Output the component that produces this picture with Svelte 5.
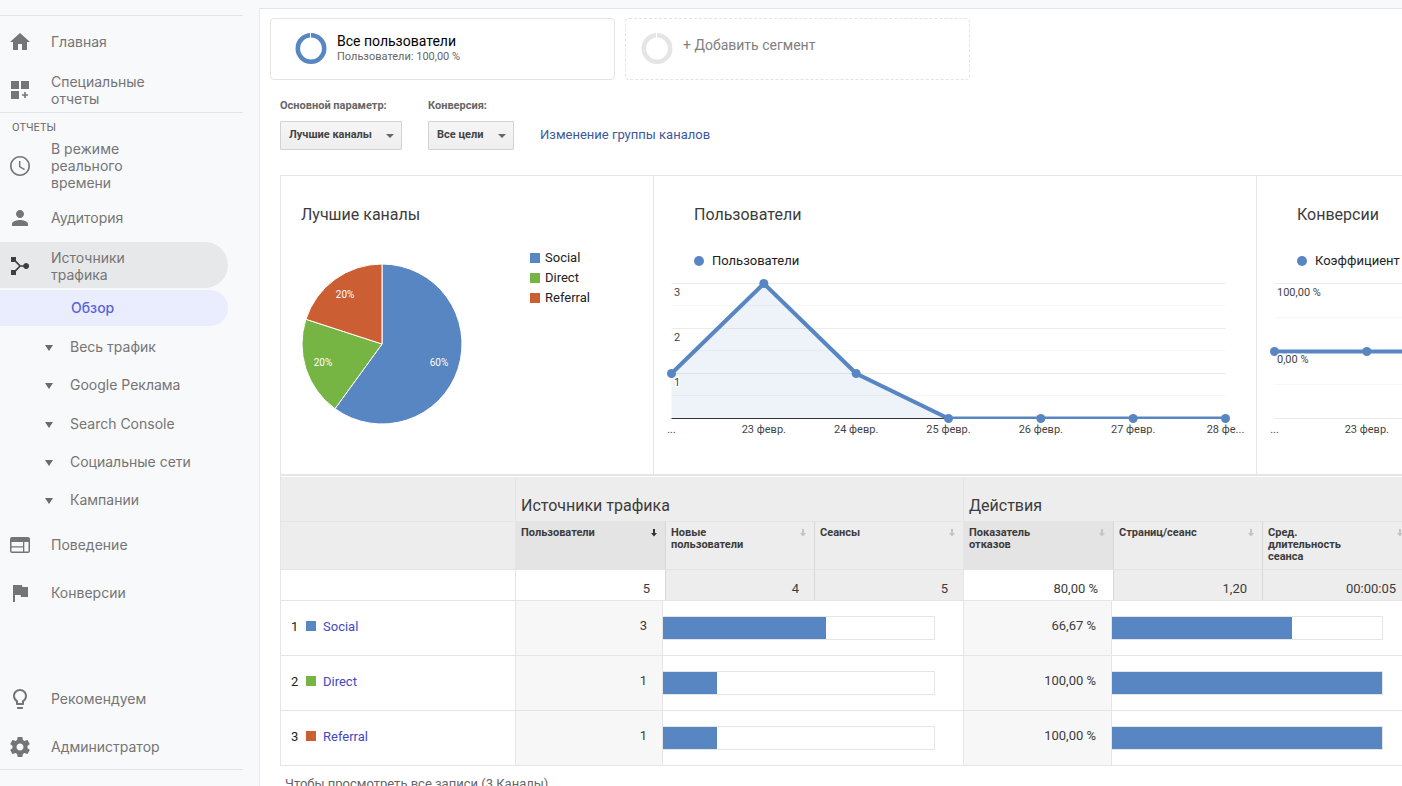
<script>
	const topItems = [
		{ label: 'Главная', icon: 'home' },
		{ label: 'Специальные отчеты', icon: 'custom' }
	];

	const reportItems = [
		{ label: 'В режиме реального времени', icon: 'clock' },
		{ label: 'Аудитория', icon: 'person' },
		{ label: 'Источники трафика', icon: 'sources', open: true },
		{ label: 'Поведение', icon: 'web' },
		{ label: 'Конверсии', icon: 'flag' }
	];

	const subItems = ['Весь трафик', 'Google Реклама', 'Search Console', 'Социальные сети', 'Кампании'];

	const bottomItems = [
		{ label: 'Рекомендуем', icon: 'bulb' },
		{ label: 'Администратор', icon: 'gear' }
	];

	const icons = {
		home: 'M10 20v-6h4v6h5v-8h3L12 3 2 12h3v8z',
		custom: 'M3 3h8v8H3zM13 3h8v8h-8zM3 13h8v8H3zM16.2 14h1.6v2.200h2.200v1.600h-2.200v2.200h-1.600v-2.200H14v-1.600h2.200z',
		clock:
			'M11.990 2C6.470 2 2 6.480 2 12s4.470 10 9.990 10C17.520 22 22 17.520 22 12S17.520 2 11.990 2zM12 20.400a8.400 8.400 0 1 1 0-16.800 8.400 8.400 0 0 1 0 16.800zM12.400 7H11v6l5.250 3.150.65-1.200-4.500-2.670z',
		person:
			'M12 12c2.210 0 4-1.790 4-4s-1.790-4-4-4-4 1.790-4 4 1.790 4 4 4zm0 2c-2.670 0-8 1.340-8 4v2h16v-2c0-2.660-5.330-4-8-4z',
		sources:
			'M3 3h5v3.600L12.500 11.200h2.700a3 3 0 1 1 0 1.600h-2.700L8 17.400V21H3v-5h4l4-4-4-4H3z',
		web: 'M20 4H4c-1.100 0-1.990.9-1.990 2L2 18c0 1.100.9 2 2 2h16c1.100 0 2-.9 2-2V6c0-1.100-.9-2-2-2zM15 18.500H3.500v-4H15zm0-5.200H3.500V9H15zm5.500 5.200h-4.200V9h4.200z',
		flag: 'M14.400 6 14 4H5v17h2v-7h5.600l.4 2h7V6z',
		bulb: 'M9 21c0 .55.45 1 1 1h4c.55 0 1-.45 1-1v-1H9v1zM12 2C8.140 2 5 5.140 5 9c0 2.380 1.190 4.470 3 5.740V17c0 .55.45 1 1 1h6c.55 0 1-.45 1-1v-2.260c1.810-1.270 3-3.360 3-5.740 0-3.860-3.140-7-7-7zm2.850 11.100-.85.6V16h-4v-2.300l-.85-.6A4.997 4.997 0 0 1 7 9c0-2.760 2.240-5 5-5s5 2.240 5 5c0 1.630-.8 3.160-2.150 4.100z',
		gear: 'M19.430 12.980c.04-.32.07-.64.07-.98s-.03-.66-.07-.98l2.110-1.650c.19-.15.24-.42.12-.64l-2-3.460c-.12-.22-.39-.3-.61-.22l-2.490 1c-.52-.4-1.080-.73-1.690-.98l-.38-2.650C14.460 2.180 14.250 2 14 2h-4c-.25 0-.46.18-.49.42l-.38 2.650c-.61.25-1.170.59-1.690.98l-2.490-1c-.23-.09-.49 0-.61.22l-2 3.460c-.13.22-.07.49.12.64l2.110 1.650c-.04.32-.07.65-.07.98s.03.66.07.98l-2.110 1.650c-.19.15-.24.42-.12.64l2 3.460c.12.22.39.3.61.22l2.490-1c.52.4 1.080.73 1.690.98l.38 2.650c.03.24.24.42.49.42h4c.25 0 .46-.18.49-.42l.38-2.650c.61-.25 1.170-.59 1.690-.98l2.490 1c.23.09.49 0 .61-.22l2-3.460c.12-.22.07-.49-.12-.64l-2.110-1.650zM12 15.500c-1.930 0-3.500-1.570-3.500-3.500s1.570-3.500 3.500-3.500 3.500 1.570 3.500 3.500-1.570 3.500-3.500 3.500z'
	};

	const channels = [
		{ name: 'Social', color: '#5886c2', users: 3, share: 60, bounce: '66,67 %', bounceShare: 66.67 },
		{ name: 'Direct', color: '#76b543', users: 1, share: 20, bounce: '100,00 %', bounceShare: 100 },
		{ name: 'Referral', color: '#cb5f33', users: 1, share: 20, bounce: '100,00 %', bounceShare: 100 }
	];

	const columns = [
		{ label: 'Пользователи', total: '5', span: 2, active: true, sorted: true },
		{ label: 'Новые пользователи', total: '4', span: 1 },
		{ label: 'Сеансы', total: '5', span: 1, last: true },
		{ label: 'Показатель отказов', total: '80,00 %', span: 2, active: true },
		{ label: 'Страниц/сеанс', total: '1,20', span: 1 },
		{ label: 'Сред. длительность сеанса', total: '00:00:05', span: 1, last: true }
	];

	// pie
	const R = 80;
	function point(share, radius) {
		const a = (share / 100) * Math.PI * 2;
		return [R + Math.sin(a) * radius, R - Math.cos(a) * radius];
	}
	let from = 0;
	const slices = channels.map((c) => {
		const start = point(from, R);
		const end = point(from + c.share, R);
		const label = point(from + c.share / 2, 61);
		from += c.share;
		return {
			...c,
			label,
			d: `M${R} ${R}L${start}A${R} ${R} 0 ${c.share > 50 ? 1 : 0} 1 ${end}Z`
		};
	});

	// line charts
	const left = 17.5;
	const right = 571.5;
	const step = (right - left) / 6;
	const bottom = 145.5;

	const charts = [
		{
			id: 'users',
			title: 'Пользователи',
			legend: 'Пользователи',
			values: [45, 135, 45, 0, 0, 0, 0],
			days: ['...', '23 февр.', '24 февр.', '25 февр.', '26 февр.', '27 февр.', '28 фе...'],
			major: [135, 90, 45],
			minor: [113, 68, 23],
			ticks: [
				{ text: '3', at: 135 },
				{ text: '2', at: 90 },
				{ text: '1', at: 45 }
			],
			area: true
		},
		{
			id: 'conversions',
			title: 'Конверсии',
			legend: 'Коэффициент',
			values: [67, 67, 67, 67, 67, 67, 67],
			days: ['...', '23 февр.'],
			major: [135, 0],
			minor: [101, 34],
			ticks: [
				{ text: '100,00 %', at: 135 },
				{ text: '0,00 %', at: 68 }
			],
			area: false
		}
	];

	function linePoints(values) {
		return values.map((v, i) => `${left + i * step},${bottom - v}`).join(' ');
	}
</script>

{#snippet navItem(item)}
	<a class="nav-item" class:open={item.open} href="#{item.icon}">
		<svg width="24" height="24" viewBox="0 0 24 24" aria-hidden="true">
			<path d={icons[item.icon]} fill-rule="evenodd" />
		</svg>
		<span>{item.label}</span>
	</a>
{/snippet}

{#snippet ring(color)}
	<svg class="ring" width="32" height="32" viewBox="0 0 32 32" aria-hidden="true">
		<circle cx="16" cy="15.500" r="13.200" fill="none" stroke={color} stroke-width="4.600" />
		<path d="M15.500 0v5" stroke="#fff" />
	</svg>
{/snippet}

<div class="app">
	<aside class="sidebar">
		<nav class="section top">
			{#each topItems as item}
				{@render navItem(item)}
			{/each}
		</nav>
		<nav class="section reports">
			<h4>ОТЧЕТЫ</h4>
			{#each reportItems as item}
				{@render navItem(item)}
				{#if item.open}
					<ul class="submenu">
						<li class="current"><a href="#overview">Обзор</a></li>
						{#each subItems as sub}
							<li>
								<a href="#sub">
									<svg width="8" height="7" viewBox="0 0 8 7" aria-hidden="true"><path d="M0 1h8L4 7z" /></svg>
									{sub}
								</a>
							</li>
						{/each}
					</ul>
				{/if}
			{/each}
		</nav>
		<nav class="section bottom">
			{#each bottomItems as item}
				{@render navItem(item)}
			{/each}
		</nav>
	</aside>

	<main>
		<div class="segments">
			<button type="button" class="segment">
				{@render ring('#5886c2')}
				<span class="segment-text">
					<span class="segment-name">Все пользователи</span>
					<span class="segment-info">Пользователи: 100,00 %</span>
				</span>
			</button>
			<button type="button" class="segment add">
				{@render ring('#e5e5e5')}
				<span class="segment-text">+ Добавить сегмент</span>
			</button>
		</div>

		<div class="filters">
			<div class="field dimension">
				<label for="dimension">Основной параметр:</label>
				<div class="select">
					<select id="dimension"><option>Лучшие каналы</option></select>
				</div>
			</div>
			<div class="field goal">
				<label for="goal">Конверсия:</label>
				<div class="select">
					<select id="goal"><option>Все цели</option></select>
				</div>
			</div>
			<a class="edit-link" href="#channels">Изменение группы каналов</a>
		</div>

		<div class="report">
			<div class="panels">
				<section class="panel pie-panel">
					<h2>Лучшие каналы</h2>
					<div class="pie-row">
						<svg class="pie" width="160" height="160" viewBox="0 0 160 160">
							{#each slices as s}
								<path d={s.d} fill={s.color} stroke="#fff" />
							{/each}
							{#each slices as s}
								<text x={s.label[0] - 1} y={s.label[1] + 3}>{s.share}%</text>
							{/each}
						</svg>
						<ul class="pie-legend">
							{#each channels as c}
								<li><i class="swatch" style="background: {c.color}"></i>{c.name}</li>
							{/each}
						</ul>
					</div>
				</section>

				{#each charts as chart}
					<section class="panel line-panel">
						<h2>{chart.title}</h2>
						<p class="line-legend"><i></i>{chart.legend}</p>
						<svg class="line-chart" width="602" height="170" viewBox="0 0 602 170">
							<clipPath id="plot-{chart.id}">
								<rect x="0" y="0" width="602" height="146" />
							</clipPath>
							{#each chart.minor as m}
								<path class="minor" d="M{left} {bottom - m}H{right}" />
							{/each}
							{#each chart.major as m}
								<path class="major" d="M{left} {bottom - m}H{right}" />
							{/each}
							{#if chart.area}
								<polygon
									class="area"
									points="{left},{bottom} {linePoints(chart.values)} {right},{bottom}"
								/>
								<path class="axis" d="M{left} {bottom}H{right}" />
							{/if}
							<polyline
								class="line"
								points={linePoints(chart.values)}
								clip-path="url(#plot-{chart.id})"
							/>
							{#each chart.values as v, i}
								<circle class="dot" cx={left + i * step} cy={bottom - v} r="4.500" />
							{/each}
							{#each chart.ticks as t}
								<text class="tick" x="20" y={bottom - t.at + 12}>{t.text}</text>
							{/each}
							{#each chart.days as day, i}
								<text class="day" x={left + i * step} y="160">{day}</text>
							{/each}
						</svg>
					</section>
				{/each}
			</div>

			<table>
				<colgroup>
					<col class="c-name" />
					<col class="c-users" />
					<col class="c-rest" />
					<col class="c-metric" />
					<col class="c-metric" />
					<col class="c-bounce" />
					<col class="c-gap" />
					<col class="c-metric" />
					<col class="c-metric" />
				</colgroup>
				<thead>
					<tr class="groups">
						<td></td>
						<th colspan="4" scope="colgroup">Источники трафика</th>
						<th colspan="4" scope="colgroup">Действия</th>
					</tr>
					<tr class="heads">
						<td></td>
						{#each columns as col}
							<th colspan={col.span} class:active={col.active} class:last={col.last} scope="col">
								<div class="head">
									<span>{col.label}</span>
									<svg class:sorted={col.sorted} width="6" height="8" viewBox="0 0 6 8" aria-hidden="true">
										<path d="M2 0h2v4h2L3 7.500 0 4h2z" />
									</svg>
								</div>
							</th>
						{/each}
					</tr>
					<tr class="totals">
						<td class="blank"></td>
						{#each columns as col}
							<td colspan={col.span} class:active={col.active} class:last={col.last}>{col.total}</td>
						{/each}
					</tr>
				</thead>
				<tbody>
					{#each channels as c, i}
						<tr>
							<td>
								<div class="channel">
									<span class="index">{i + 1}</span>
									<i class="swatch" style="background: {c.color}"></i>
									<a href="#{c.name}">{c.name}</a>
								</div>
							</td>
							<td class="value">{c.users}</td>
							<td colspan="3" class="bar-cell">
								<div class="bar"><div class="fill" style="width: {(c.users / 5) * 100}%"></div></div>
							</td>
							<td class="value">{c.bounce}</td>
							<td colspan="3" class="bar-cell">
								<div class="bar"><div class="fill" style="width: {c.bounceShare}%"></div></div>
							</td>
						</tr>
					{/each}
				</tbody>
			</table>
		</div>
		<p class="footnote">Чтобы просмотреть все записи (3 Каналы)</p>
	</main>
</div>

<style>
	:global(body) {
		margin: 0;
		background: #f8f9fb;
	}

	.app {
		display: grid;
		grid-template-columns: 259px minmax(0, 1fr);
		height: 100vh;
		overflow: hidden;
		font-family: Roboto, sans-serif;
		font-size: 13px;
		color: #3c3c3c;
	}

	h2,
	h4,
	p,
	ul {
		margin: 0;
		padding: 0;
		font-weight: 400;
		list-style: none;
	}

	a {
		text-decoration: none;
	}

	/* sidebar */
	.sidebar {
		display: flex;
		flex-direction: column;
		box-sizing: border-box;
		padding: 15px 16px 16px 0;
		font-family: Inter, sans-serif;
		font-size: 14px;
		line-height: 17px;
	}

	.section {
		display: flex;
		flex-direction: column;
		gap: 2px;
	}

	.top {
		padding-top: 2px;
		border-top: 1px solid #e2e3e5;
		border-bottom: 1px solid #e2e3e5;
	}

	.bottom {
		margin-top: auto;
		border-bottom: 1px solid #e2e3e5;
	}

	.reports h4 {
		padding: 6px 12px 0;
		font-family: Roboto, sans-serif;
		font-size: 11px;
		color: #6b6b6b;
	}

	.nav-item {
		display: flex;
		align-items: center;
		gap: 19px;
		box-sizing: border-box;
		min-height: 46px;
		margin-right: 15px;
		padding: 2px 0 1px 8px;
		color: #757575;
	}

	.nav-item span {
		max-width: 120px;
	}

	.nav-item svg {
		flex: none;
		fill: #757575;
	}

	.nav-item.open {
		border-radius: 0 23px 23px 0;
		background: #e7e8ea;
	}

	.nav-item.open svg {
		fill: #3c4043;
	}

	.submenu {
		display: flex;
		flex-direction: column;
		min-height: 229px;
		margin-right: 15px;
	}

	.submenu li {
		display: flex;
		flex: 1;
		align-items: center;
		padding-left: 45px;
	}

	.submenu a {
		display: flex;
		align-items: center;
		gap: 17px;
		color: #757575;
	}

	.submenu svg {
		margin-top: 2px;
		fill: #6b6b6b;
	}

	.submenu .current {
		box-sizing: border-box;
		flex: none;
		height: 36px;
		margin-bottom: 1px;
		padding: 0 0 2px 71px;
		border-radius: 0 18px 18px 0;
		background: #e9edfd;
	}

	.submenu .current a {
		font-weight: 500;
		color: #5b62dd;
	}

	/* main */
	main {
		margin-top: 8px;
		padding: 9px 0 0 10px;
		border-top: 1px solid #e3e4e6;
		border-left: 1px solid #e9eaec;
		background: #fff;
		overflow: hidden;
	}

	.segments {
		display: flex;
		gap: 10px;
	}

	.segment {
		display: flex;
		align-items: center;
		gap: 10px;
		box-sizing: border-box;
		width: 345px;
		height: 62px;
		padding: 0 24px;
		border: 1px solid #e3e3e3;
		border-radius: 4px;
		background: #fff;
		font-family: inherit;
		font-size: 14px;
		line-height: 16px;
		text-align: left;
		color: #000;
	}

	.segment.add {
		padding: 0 15px;
		border-style: dashed;
		color: #808080;
	}

	.add .segment-text {
		padding-bottom: 8px;
	}

	.segment-name,
	.segment-info {
		display: block;
	}

	.segment-info {
		font-size: 11px;
		color: #666;
	}

	.filters {
		display: flex;
		gap: 26px;
		margin: 18px 0 0 10px;
	}

	.field label {
		display: block;
		margin-bottom: 7px;
		font-size: 11px;
		font-weight: 700;
		line-height: 16px;
		white-space: nowrap;
		color: #666;
	}

	.dimension {
		width: 122px;
	}

	.goal {
		width: 86px;
	}

	.select {
		position: relative;
	}

	.select::after {
		content: '';
		position: absolute;
		top: 13px;
		right: 8px;
		border: 4px solid transparent;
		border-top-color: #666;
		border-bottom: 0;
		pointer-events: none;
	}

	select {
		appearance: none;
		display: block;
		width: 100%;
		height: 29px;
		padding: 0 16px 2px 8px;
		border: 1px solid #d2d2d2;
		border-radius: 1px;
		background: linear-gradient(#f6f6f6, #eee);
		font-family: inherit;
		font-size: 11px;
		font-weight: 700;
		color: #444;
	}

	.edit-link {
		align-self: flex-end;
		padding-bottom: 2px;
		line-height: 27px;
		color: #3c589c;
	}

	.report {
		margin: 25px 0 0 10px;
		border-left: 1px solid #e5e5e5;
	}

	.panels {
		display: flex;
		margin-bottom: 1px;
		border-top: 1px solid #e5e5e5;
		border-bottom: 2px solid #e5e5e5;
		overflow: hidden;
	}

	.panel {
		flex: none;
		box-sizing: border-box;
		min-height: 298px;
		border-right: 1px solid #e5e5e5;
	}

	.pie-panel {
		width: 373px;
		padding: 27px 20px 0;
	}

	.line-panel {
		width: 603px;
		padding-top: 27px;
	}

	h2 {
		font-size: 16px;
		line-height: 24px;
	}

	.line-panel h2,
	.line-legend {
		padding-left: 40px;
	}

	.pie-row {
		display: flex;
		gap: 68px;
		margin-top: 21px;
	}

	.pie {
		flex: none;
		margin: 16px 0 0 1px;
		overflow: visible;
	}

	.pie text {
		font-size: 10px;
		text-anchor: middle;
		fill: #fff;
	}

	.pie-legend li {
		display: flex;
		align-items: center;
		gap: 5px;
		line-height: 20px;
		color: #222;
	}

	.swatch {
		flex: none;
		width: 10px;
		height: 10px;
	}

	.line-legend {
		display: flex;
		align-items: center;
		gap: 8px;
		margin-top: 24px;
		line-height: 20px;
		color: #222;
	}

	.line-legend i {
		width: 10px;
		height: 10px;
		border-radius: 50%;
		background: #5886c2;
	}

	.line-chart {
		display: block;
		margin-top: 2px;
	}

	.major {
		stroke: #ebebeb;
	}

	.minor {
		stroke: #f7f7f7;
	}

	.axis {
		stroke: #333;
	}

	.area {
		fill: #5886c2;
		opacity: 0.1;
	}

	.line {
		fill: none;
		stroke: #5886c2;
		stroke-width: 4;
	}

	.dot {
		fill: #5886c2;
	}

	.tick,
	.day {
		font-size: 11px;
		fill: #444;
	}

	.tick {
		stroke: #fff;
		stroke-width: 3;
		paint-order: stroke;
	}

	.day {
		text-anchor: middle;
	}

	/* table */
	table {
		width: 100%;
		min-width: 1131px;
		table-layout: fixed;
		border-collapse: separate;
		border-spacing: 0;
	}

	.c-name {
		width: 235px;
	}
	.c-users {
		width: 147px;
	}
	.c-rest {
		width: 3px;
	}
	.c-metric {
		width: 149px;
	}
	.c-bounce {
		width: 148px;
	}
	.c-gap {
		width: 2px;
	}

	th,
	td {
		box-sizing: border-box;
		padding: 0;
		border-right: 1px solid #e5e5e5;
		border-bottom: 1px solid #e5e5e5;
		font-weight: 400;
		text-align: left;
		vertical-align: top;
	}

	thead th,
	thead td {
		background: #ededed;
	}

	.groups > * {
		height: 45px;
		padding: 17px 5px 3px;
		font-size: 16px;
		line-height: 24px;
	}

	.heads > * {
		height: 48px;
		padding: 5px 8px 0 5px;
		font-size: 11px;
		font-weight: 700;
		line-height: 12px;
	}

	.heads th,
	.totals td {
		border-right-color: #d8d8d8;
	}

	.heads th.last,
	.totals td.last,
	.totals td.blank {
		border-right-color: #e5e5e5;
	}

	.heads th.active {
		background: #e4e4e4;
	}

	.head {
		display: flex;
		justify-content: space-between;
	}

	.head span {
		max-width: 90px;
	}

	.head svg {
		flex: none;
		margin-top: 2px;
		fill: #c4c4c4;
	}

	.head svg.sorted {
		fill: #333;
	}

	.totals td {
		height: 31px;
		padding: 10px 15px 0 0;
		line-height: 18px;
		text-align: right;
	}

	.totals td.active,
	.totals td.blank {
		background: #fff;
	}

	tbody td {
		height: 55px;
	}

	.channel {
		display: flex;
		align-items: baseline;
		padding: 16px 0 0 10px;
		line-height: 20px;
	}

	.index {
		width: 15px;
		color: #222;
	}

	.channel a {
		margin-left: 7px;
		color: #4348c4;
	}

	.value {
		padding: 16px 15px 0 0;
		background: #f7f7f7;
		line-height: 18px;
		text-align: right;
	}

	.bar-cell {
		padding: 15px 28px 0 0;
	}

	.bar {
		height: 22px;
		border: 1px solid #e5e5e5;
		border-left: 0;
	}

	.fill {
		height: 100%;
		background: #5886c2;
	}

	.footnote {
		padding: 8px 0 0 15px;
		line-height: 20px;
		color: #666;
	}
</style>
